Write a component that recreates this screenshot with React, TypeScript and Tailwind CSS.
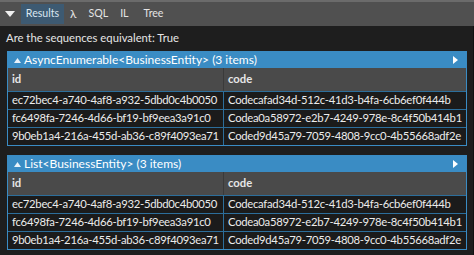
import React from 'react';

type Row = { id: string; code: string };

const rows: Row[] = [
  { id: 'ec72bec4-a740-4af8-a932-5dbd0c4b0050', code: 'Codecafad34d-512c-41d3-b4fa-6cb6ef0f444b' },
  { id: 'fc6498fa-7246-4d66-bf19-bf9eea3a91c0', code: 'Codea0a58972-e2b7-4249-978e-8c4f50b414b1' },
  { id: '9b0eb1a4-216a-455d-ab36-c89f4093ea71', code: 'Coded9d45a79-7059-4808-9cc0-4b55668adf2e' },
];

const ResultTable = ({ title }: { title: string }) => {
  return (
    <div className="w-[460px] border border-[#3a8cc4]">
      <div className="flex h-[16px] items-center bg-[#3a8cc4] pl-[6px] pr-[8px] text-[12px] leading-none text-white">
        <svg width="7" height="5" viewBox="0 0 7 5" className="mr-[3px]">
          <path d="M0 5 L3.5 0 L7 5 Z" fill="#e8f2fa" />
        </svg>
        <span className="whitespace-nowrap">{title}</span>
        <svg width="5" height="8" viewBox="0 0 5 8" className="ml-auto">
          <path d="M0 0 L5 4 L0 8 Z" fill="#ffffff" />
        </svg>
      </div>
      <div className="grid grid-cols-[216px_minmax(0,1fr)] overflow-hidden whitespace-nowrap text-[11.3px] tracking-[-0.28px]">
        <div className="flex h-[23px] items-center border-r border-[#3a3a3a] bg-[#4a4a4a] px-[4px] font-bold tracking-normal text-[#e6e6e6]">
          id
        </div>
        <div className="flex h-[23px] items-center bg-[#4a4a4a] px-[4px] font-bold tracking-normal text-[#e6e6e6]">
          code
        </div>
        {rows.map((r) => (
          <React.Fragment key={r.id}>
            <div className="flex h-[18px] items-center border-r border-t border-[#2c6e9b] bg-[#1b1b1b] px-[4px] text-[#ececec]">
              {r.id}
            </div>
            <div className="flex h-[18px] items-center border-t border-[#2c6e9b] bg-[#1b1b1b] px-[4px] text-[#ececec]">
              {r.code}
            </div>
          </React.Fragment>
        ))}
      </div>
    </div>
  );
};

const App = () => {
  return (
    <div
      className="flex h-[255px] w-[474px] flex-col overflow-hidden bg-[#1e1e1e]"
      style={{ fontFamily: 'Lato, "Noto Sans", sans-serif' }}
    >
      <div className="flex h-[26px] items-center border-t-2 border-[#6b6b6b] bg-[#505050] text-[10.6px] text-[#e4e4e4]">
        <svg width="10" height="6" viewBox="0 0 10 6" className="ml-[5px] mr-[6px]">
          <path d="M0 0 L10 0 L5 6 Z" fill="#f0f0f0" />
        </svg>
        <span className="flex h-[20px] w-[43px] items-center justify-center bg-[#3d5a72] text-[#dbe6f0]">
          Results
        </span>
        <span className="ml-[6px] text-[12px]">λ</span>
        <span className="ml-[12px]">SQL</span>
        <span className="ml-[12px]">IL</span>
        <span className="ml-[15px]">Tree</span>
      </div>
      <div className="flex flex-1 border-r border-[#111]">
        <div className="flex flex-col pl-[7px]">
          <div className="flex h-[25px] items-center whitespace-nowrap text-[11.3px] text-[#e6e6e6]">
            <span className="-ml-px">Are the sequences equivalent: True</span>
          </div>
          <ResultTable title="AsyncEnumerable<BusinessEntity> (3 items)" />
          <div className="h-[9px]" />
          <ResultTable title="List<BusinessEntity> (3 items)" />
        </div>
      </div>
    </div>
  );
};

export default App;
